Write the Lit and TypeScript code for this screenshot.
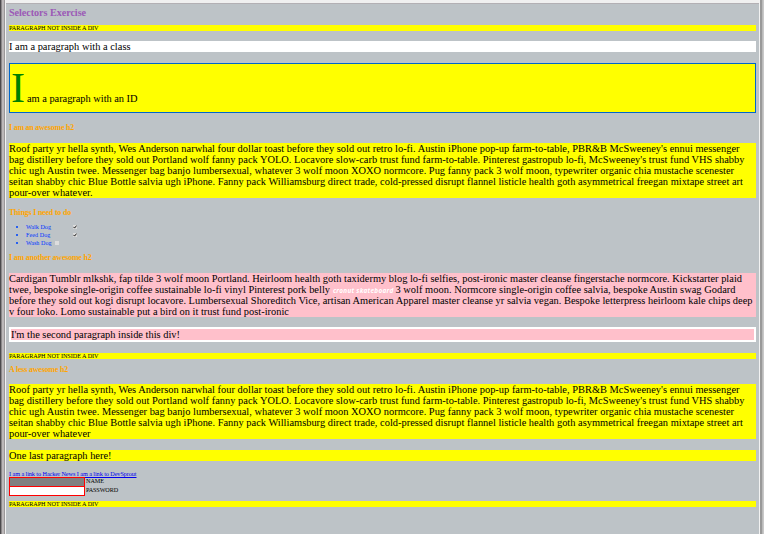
import { LitElement, html, css } from "lit";
import { customElement, property } from "lit/decorators.js";

/** One line of text, tracked so that it spans the given measure. */
@customElement("text-line")
class TextLine extends LitElement {
  @property({ type: Number }) measure = 0;
  static styles = css`
    :host { display: block; white-space: nowrap; text-decoration: inherit; }
    .run { display: inline-block; text-decoration: inherit; vertical-align: top; }
  `;
  render() { return html`<span class="run"><slot></slot></span>`; }
  firstUpdated() {
    const run = this.renderRoot.querySelector(".run") as HTMLElement;
    const count = (this.textContent ?? "").trim().length;
    if (!this.measure || !count) return;
    run.style.letterSpacing = (this.measure - run.getBoundingClientRect().width) / count + "px";
  }
}

const line = (text: string, measure: number) => html`<text-line measure=${measure}>${text}</text-line>`;

const roof = (ending: string, last: number) => html`<p class="copy">
  ${line("Roof party yr hella synth, Wes Anderson narwhal four dollar toast before they sold out retro lo-fi. Austin iPhone pop-up farm-to-table, PBR&B McSweeney's ennui messenger", 730.5)}
  ${line("bag distillery before they sold out Portland wolf fanny pack YOLO. Locavore slow-carb trust fund farm-to-table. Pinterest gastropub lo-fi, McSweeney's trust fund VHS shabby", 735.5)}
  ${line("chic ugh Austin twee. Messenger bag banjo lumbersexual, whatever 3 wolf moon XOXO normcore. Pug fanny pack 3 wolf moon, typewriter organic chia mustache scenester", 725)}
  ${line("seitan shabby chic Blue Bottle salvia ugh iPhone. Fanny pack Williamsburg direct trade, cold-pressed disrupt flannel listicle health goth asymmetrical freegan mixtape street art", 734)}
  ${line(ending, last)}
</p>`;

const outside = html`<p class="outside">${line("PARAGRAPH NOT INSIDE A DIV", 89.5)}</p>`;

@customElement("app-root")
class AppRoot extends LitElement {
  static styles = css`
    :host {
      display: flex; width: 764px; height: 534px; overflow: hidden;
      background: #bdc3c7; color: #000;
      font: 10.4px/11px "Liberation Serif", serif;
    }
    .left { flex: none; width: 6px; background: linear-gradient(90deg, #4c4a4d 0 1px, #8b8889 1px 2px, #bcb8b9 2px 4px, #9b9899 4px 5px, #f2f2f2 5px 6px); }
    .right { flex: none; width: 5px; background: linear-gradient(90deg, #f2f2f2 0 1px, #999 1px 3px, #bbb 3px 4px, #c9c9c9 4px 5px); }
    .page { flex: 1; min-width: 0; box-sizing: border-box; border-top: 3px solid #f0f0f0; }
    .content { border-top: 1px solid #b3b0b4; padding: 3px 3px 0; }
    h1, h2, p, ul { margin: 0; padding: 0; }
    h1 { font-size: 10.2px; line-height: 12px; color: #9b59b6; margin-bottom: 6px; }
    h2 { font-size: 7.9px; line-height: 9px; color: #ffa500; }
    .awesome { margin: 10px 0 11px; }
    .todo { margin: 10px 0 6px; }
    .another { margin: 6px 0 11px; }
    .less { margin: 6px 0 10px; }
    .outside { height: 6px; line-height: 6px; font-size: 6.2px; background: #ff0; }
    .classy { height: 11px; background: #fff; margin: 10px 0 11px; }
    .ident { display: flex; align-items: baseline; box-sizing: border-box; height: 50px; padding: 0 1px; border: 1px solid #0066cc; background: #ff0; line-height: 49px; }
    .initial { font-size: 42px; color: #008000; margin-right: 2px; }
    .copy { background: #ff0; }
    .pink { background: #ffc0cb; }
    .mixed { display: flex; height: 11px; }
    .cronut { color: #fff; font-size: 6.4px; line-height: 13px; font-style: italic; font-weight: bold; font-family: "Open Sans", "DejaVu Sans", sans-serif; margin: 0 2px 0 3px; }
    .second { border: 2px solid #fff; background: #ffc0cb; height: 11px; margin: 10px 0 11px; }
    .final { margin-top: 11px; }
    ul { list-style: none; font-size: 6.1px; color: #0033ff; line-height: 8px; }
    li { display: flex; align-items: center; height: 8px; padding-left: 7px; }
    .bullet { width: 2px; height: 2px; background: #2860f0; margin-right: 8px; }
    .box { width: 4px; height: 4px; margin-left: 22px; background: #ddd; }
    .box.near { margin-left: 3px; }
    .box svg { display: block; }
    .links { display: flex; font-size: 6.2px; line-height: 7px; height: 7px; margin-top: 9px; }
    a { color: #00e; text-decoration: underline; }
    .field { display: flex; font-size: 6.2px; line-height: 8px; gap: 1px; height: 9px; }
    .input { box-sizing: border-box; width: 76px; height: 10px; border: 1px solid #f00; background: #fff; }
    .input.gray { background: #808080; }
    .fields { margin-bottom: 6px; }
  `;
  item(name: string, measure: number, checked: boolean) {
    return html`<li><span class="bullet"></span>${line(name, measure)}<span class="box ${checked ? "" : "near"}">${checked
      ? html`<svg width="4" height="4" viewBox="0 0 4 4"><path d="M.5 1.9 1.6 3.1 3.5.6" fill="none" stroke="#222" stroke-width="1"/></svg>` : ""}</span></li>`;
  }
  render() {
    return html`
      <div class="left"></div>
      <main class="page"><div class="content">
        <h1>${line("Selectors Exercise", 77)}</h1>
        ${outside}
        <p class="classy">${line("I am a paragraph with a class", 121.5)}</p>
        <p class="ident"><span class="initial">I</span>${line("am a paragraph with an ID", 110.5)}</p>
        <h2 class="awesome">${line("I am an awesome h2", 65)}</h2>
        ${roof("pour-over whatever.", 83.5)}
        <h2 class="todo">${line("Things I need to do", 62)}</h2>
        <ul>${this.item("Walk Dog", 25, true)}${this.item("Feed Dog", 24.5, true)}${this.item("Wash Dog", 25.5, false)}</ul>
        <h2 class="another">${line("I am another awesome h2", 82.5)}</h2>
        <p class="copy pink">
          ${line("Cardigan Tumblr mlkshk, fap tilde 3 wolf moon Portland. Heirloom health goth taxidermy blog lo-fi selfies, post-ironic master cleanse fingerstache normcore. Kickstarter plaid", 733)}
          <span class="mixed">${line("twee, bespoke single-origin coffee sustainable lo-fi vinyl Pinterest pork belly", 321)}<span class="cronut">${line("cronut skateboard", 60.5)}</span>${line("3 wolf moon. Normcore single-origin coffee salvia, bespoke Austin swag Godard", 340)}</span>
          ${line("before they sold out kogi disrupt locavore. Lumbersexual Shoreditch Vice, artisan American Apparel master cleanse yr salvia vegan. Bespoke letterpress heirloom kale chips deep", 743.5)}
          ${line("v four loko. Lomo sustainable put a bird on it trust fund post-ironic", 280)}
        </p>
        <p class="second">${line("I'm the second paragraph inside this div!", 169)}</p>
        ${outside}
        <h2 class="less">${line("A less awesome h2", 59)}</h2>
        ${roof("pour-over whatever", 81.5)}
        <p class="copy final">${line("One last paragraph here!", 102.5)}</p>
        <div class="links"><a>${line("I am a link to Hacker News I am a link to DevSprout", 127.5)}</a></div>
        <div class="fields">
          <div class="field"><span class="input gray"></span>${line("NAME", 18)}</div>
          <div class="field"><span class="input"></span>${line("PASSWORD", 32)}</div>
        </div>
        ${outside}
      </div></main>
      <div class="right"></div>`;
  }
}
